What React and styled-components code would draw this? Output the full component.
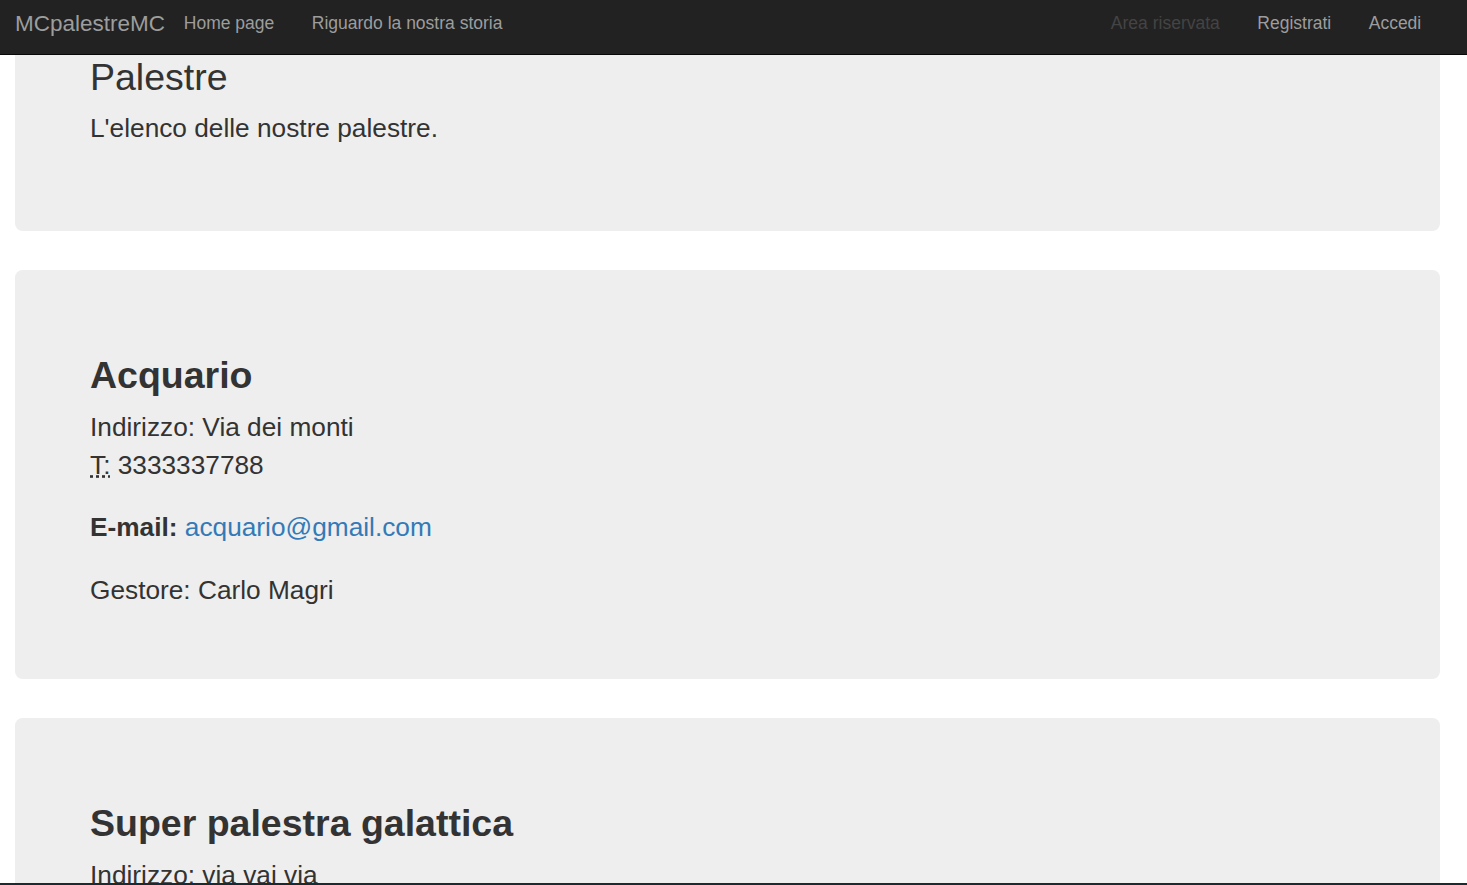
import React from "react";
import styled, { createGlobalStyle, css } from "styled-components";

const GlobalStyle = createGlobalStyle`
  html, body {
    margin: 0;
    padding: 0;
    overflow: hidden;
    background: #fff;
  }
  body {
    font-family: "Liberation Sans", Arial, Helvetica, sans-serif;
    font-size: 17.5px;
    line-height: 1.42857;
    color: #333;
  }
`;

const Navbar = styled.nav`
  display: flex;
  align-items: flex-start;
  height: 54px;
  padding: 0 27px 0 15px;
  background: #222;
  border-bottom: 1px solid #080808;
`;

const Brand = styled.a`
  padding: 10.5px 0 10px;
  font-size: 22.5px;
  line-height: 25px;
  color: #9d9d9d;
  text-decoration: none;
`;

const NavList = styled.ul`
  display: flex;
  margin: 0;
  padding: 0;
  list-style: none;
  ${(p) => p.$right && "margin-left: auto;"}
`;

const NavLink = styled.a`
  display: block;
  padding: 11px 18.75px 10px;
  font-size: 17.5px;
  line-height: 25px;
  color: ${(p) => (p.$disabled ? "#444" : "#9d9d9d")};
  text-decoration: none;
  cursor: ${(p) => (p.$disabled ? "not-allowed" : "pointer")};
`;

const Main = styled.main`
  padding: 0 27px 0 15px;
`;

const Jumbotron = styled.section`
  padding: 60px 75px;
  margin-bottom: 39px;
  background: #eee;
  border-radius: 7.5px;
  ${(p) =>
    p.$cropped &&
    css`
      padding-top: 1.5px;
      border-top-left-radius: 0;
      border-top-right-radius: 0;
    `}
`;

const Title = styled.h2`
  margin: ${(p) => (p.$flush ? "0" : "25px")} 0 12.5px;
  font-size: 37.5px;
  line-height: 1.1;
  font-weight: ${(p) => (p.$bold ? 700 : 400)};
  color: #333;
`;

const Lead = styled.p`
  margin: 0 0 ${(p) => p.$space ?? 12.5}px;
  font-size: 26.25px;
  line-height: 37.5px;
`;

const Address = styled.address`
  margin: 0 0 25px;
  font-style: normal;
  font-size: 26.25px;
  line-height: 37.5px;
`;

const Abbr = styled.abbr`
  text-decoration: underline dotted;
  cursor: help;
`;

const Mail = styled.a`
  color: #337ab7;
  text-decoration: none;
`;

const EdgeLine = styled.div`
  position: fixed;
  left: 0;
  right: 0;
  bottom: 0;
  height: 2px;
  background: #1a2a31;
`;

const gyms = [
  {
    name: "Acquario",
    address: "Via dei monti",
    phone: "3333337788",
    email: "acquario@gmail.com",
    manager: "Carlo Magri",
  },
  {
    name: "Super palestra galattica",
    address: "via vai via",
  },
];

const Gym = ({ gym }) => (
  <Jumbotron>
    <Title $bold>{gym.name}</Title>
    <Address>
      Indirizzo: {gym.address}
      {gym.phone && (
        <>
          <br />
          <Abbr title="Telefono">T:</Abbr> {gym.phone}
        </>
      )}
    </Address>
    {gym.email && (
      <Address>
        <strong>E-mail:</strong> <Mail href="#">{gym.email}</Mail>
      </Address>
    )}
    {gym.manager && <Lead $space={10}>Gestore: {gym.manager}</Lead>}
  </Jumbotron>
);

const App = () => (
  <>
    <GlobalStyle />
    <Navbar>
      <Brand href="#">MCpalestreMC</Brand>
      <NavList>
        <li><NavLink href="#">Home page</NavLink></li>
        <li><NavLink href="#">Riguardo la nostra storia</NavLink></li>
      </NavList>
      <NavList $right>
        <li><NavLink $disabled>Area riservata</NavLink></li>
        <li><NavLink href="#">Registrati</NavLink></li>
        <li><NavLink href="#">Accedi</NavLink></li>
      </NavList>
    </Navbar>
    <Main>
      <Jumbotron $cropped>
        <Title $flush>Palestre</Title>
        <Lead $space={23.5}>L'elenco delle nostre palestre.</Lead>
      </Jumbotron>
      {gyms.map((gym) => (
        <Gym key={gym.name} gym={gym} />
      ))}
    </Main>
    <EdgeLine />
  </>
);

export default App;
